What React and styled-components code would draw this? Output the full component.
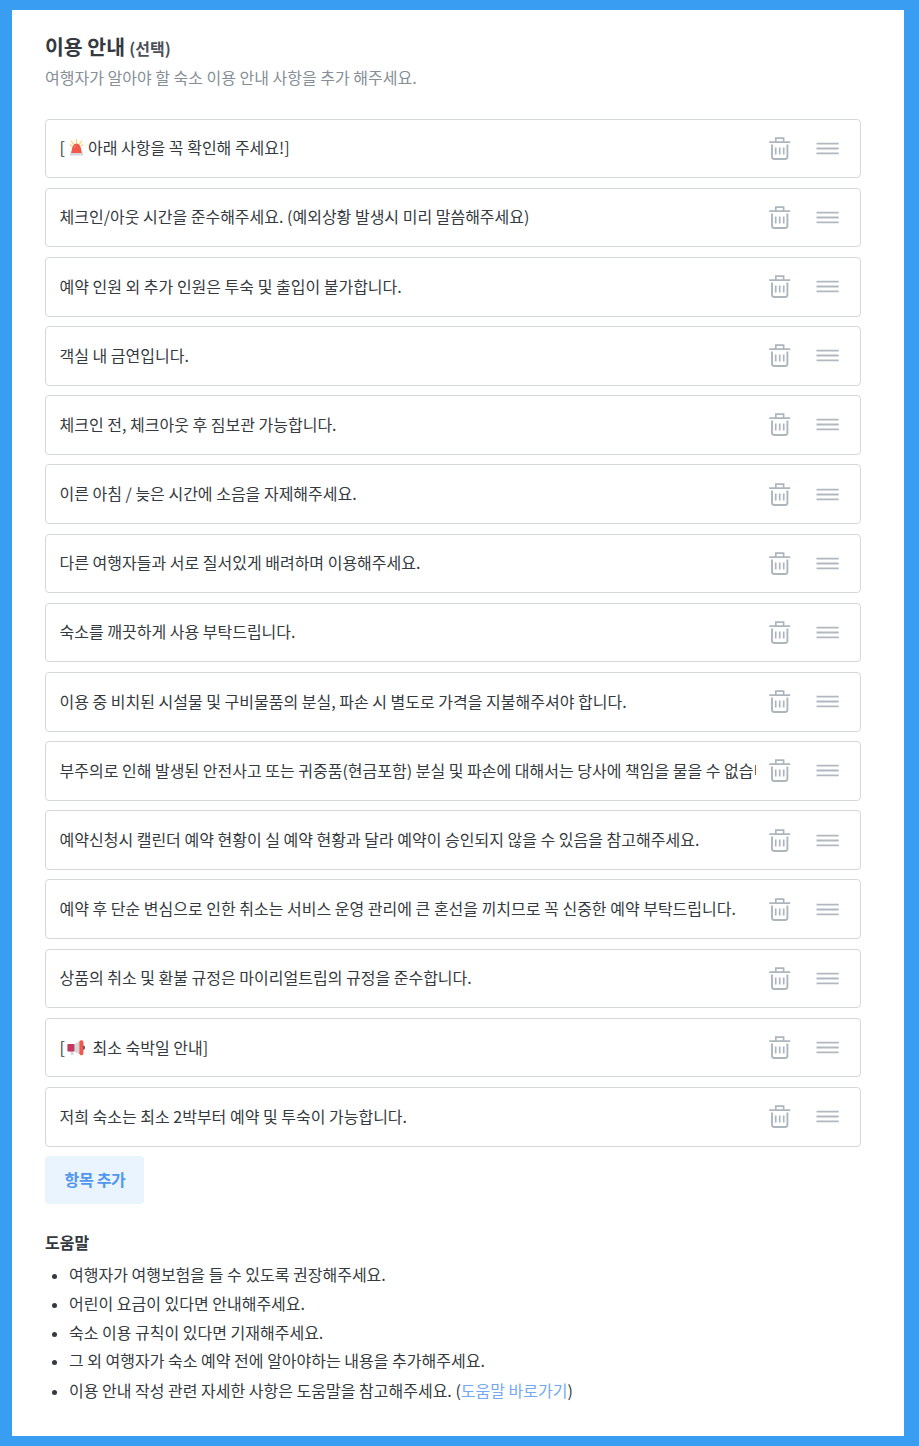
import React from "react";
import styled, { createGlobalStyle } from "styled-components";

const rules = [
  { id: 1, before: "[ ", icon: "siren", text: " 아래 사항을 꼭 확인해 주세요!]" },
  { id: 2, text: "체크인/아웃 시간을 준수해주세요. (예외상황 발생시 미리 말씀해주세요)" },
  { id: 3, text: "예약 인원 외 추가 인원은 투숙 및 출입이 불가합니다." },
  { id: 4, text: "객실 내 금연입니다." },
  { id: 5, text: "체크인 전, 체크아웃 후 짐보관 가능합니다." },
  { id: 6, text: "이른 아침 / 늦은 시간에 소음을 자제해주세요." },
  { id: 7, text: "다른 여행자들과 서로 질서있게 배려하며 이용해주세요." },
  { id: 8, text: "숙소를 깨끗하게 사용 부탁드립니다." },
  { id: 9, text: "이용 중 비치된 시설물 및 구비물품의 분실, 파손 시 별도로 가격을 지불해주셔야 합니다." },
  { id: 10, text: "부주의로 인해 발생된 안전사고 또는 귀중품(현금포함) 분실 및 파손에 대해서는 당사에 책임을 물을 수 없습니다." },
  { id: 11, text: "예약신청시 캘린더 예약 현황이 실 예약 현황과 달라 예약이 승인되지 않을 수 있음을 참고해주세요." },
  { id: 12, text: "예약 후 단순 변심으로 인한 취소는 서비스 운영 관리에 큰 혼선을 끼치므로 꼭 신중한 예약 부탁드립니다." },
  { id: 13, text: "상품의 취소 및 환불 규정은 마이리얼트립의 규정을 준수합니다." },
  { id: 14, before: "[", icon: "megaphone", text: " 최소 숙박일 안내]" },
  { id: 15, text: "저희 숙소는 최소 2박부터 예약 및 투숙이 가능합니다." },
];

const tips = [
  "여행자가 여행보험을 들 수 있도록 권장해주세요.",
  "어린이 요금이 있다면 안내해주세요.",
  "숙소 이용 규칙이 있다면 기재해주세요.",
  "그 외 여행자가 숙소 예약 전에 알아야하는 내용을 추가해주세요.",
];

function Siren() {
  return (
    <Emoji width="16" height="18" viewBox="2 0 16 18">
      <path
        d="M9.5 .6v3M4.3 2l2 2.6M14.7 2l-2 2.6M3 5.8l1.8 1M16 5.8l-1.8 1"
        stroke="#fcd462"
        strokeWidth="1.2"
        strokeLinecap="round"
      />
      <path d="M4 14.2 5.3 8.4Q6.4 4.6 9.5 4.6t4.2 3.8l1.3 5.8z" fill="#ef5a4a" />
      <path d="M7.2 7.6q.6-1.1 1.6-1.1L7.8 9z" fill="#f89a8f" />
      <rect x="3" y="14" width="13" height="2.6" rx=".7" fill="#d5d6db" />
    </Emoji>
  );
}

function Megaphone() {
  return (
    <Emoji width="24" height="18" viewBox="-1 0 24 18">
      <path d="M3.8 11.4h3.4l.5 4.6H5.2z" fill="#d5d6db" />
      <path d="M8 5.2 14 2v13.6l-6-3z" fill="#d5d6db" />
      <rect x="1.4" y="5" width="7" height="7.6" rx=".8" fill="#c1395e" />
      <path d="M17 6.2q2 .4 2 2.4t-2 2.5z" fill="#464655" />
      <rect x="13.4" y="1.3" width="4" height="15" rx="1.7" fill="#ef5a4a" />
    </Emoji>
  );
}

function Trash() {
  return (
    <svg width="24" height="26" viewBox="0 0 24 26" fill="none" stroke="#adb5bd">
      <path d="M1.2 6.1h21M7.8 6V2.1h7.8V6" strokeWidth="1.7" />
      <path d="M4 8.6v12.2q0 2.2 2.2 2.2h11q2.2 0 2.2-2.2V8.6" strokeWidth="1.9" />
      <path d="M7.7 11.4v7.2M11.7 11.4v7.2M15.7 11.4v7.2" strokeWidth="1.7" />
    </svg>
  );
}

function Handle() {
  return (
    <svg width="24" height="16" viewBox="0 0 24 16" stroke="#b1b8c0" strokeWidth="1.8">
      <path d="M.5 2.6h22.2M.5 7.5h22.2M.5 12.4h22.2" />
    </svg>
  );
}

export default function App() {
  return (
    <Page>
      <GlobalStyle />
      <Card>
        <Title>
          이용 안내 <Optional>(선택)</Optional>
        </Title>
        <Description>여행자가 알아야 할 숙소 이용 안내 사항을 추가 해주세요.</Description>
        <Rules>
          {rules.map((rule) => (
            <Rule key={rule.id}>
              <RuleText>
                {rule.before}
                {rule.icon === "siren" && <Siren />}
                {rule.icon === "megaphone" && <Megaphone />}
                {rule.text}
              </RuleText>
              <IconButton aria-label="삭제">
                <Trash />
              </IconButton>
              <IconButton aria-label="이동">
                <Handle />
              </IconButton>
            </Rule>
          ))}
        </Rules>
        <AddButton>항목 추가</AddButton>
        <HelpTitle>도움말</HelpTitle>
        <Tips>
          {tips.map((tip) => (
            <Tip key={tip}>{tip}</Tip>
          ))}
          <Tip $last>
            이용 안내 작성 관련 자세한 사항은 도움말을 참고해주세요. (
            <HelpLink>도움말 바로가기</HelpLink>)
          </Tip>
        </Tips>
      </Card>
    </Page>
  );
}

const GlobalStyle = createGlobalStyle`
  * {
    box-sizing: border-box;
  }
  body {
    margin: 0;
    font-family: "Noto Sans CJK KR", sans-serif;
    font-size: 16px;
    color: #343a40;
  }
`;
const Page = styled.div`
  height: 1446px;
  padding: 10px 15px 10px 12px;
  background-color: #399df1;
`;
const Card = styled.div`
  height: 1426px;
  padding: 20px 43px 0 33px;
  background-color: white;
`;
const Title = styled.h1`
  margin: 0;
  font-size: 20.5px;
  font-weight: 600;
  line-height: 32px;
  color: #343a40;
`;
const Optional = styled.span`
  margin-left: -0.5px;
  font-size: 16px;
  color: #495057;
`;
const Description = styled.p`
  margin: 0;
  line-height: 26px;
  color: #868e96;
`;
const Rules = styled.div`
  display: flex;
  flex-direction: column;
  gap: 9.6px;
  margin-top: 28.6px;
`;
const Rule = styled.div`
  display: flex;
  align-items: center;
  height: 59.58px;
  padding: 0.8px 20px 0 13.5px;
  border: 1px solid #d5d8dc;
  border-radius: 4px;
`;
const RuleText = styled.div`
  flex: 1;
  min-width: 0;
  padding-bottom: 3px;
  overflow: hidden;
  white-space: pre;
  line-height: 28px;
`;
const Emoji = styled.svg`
  vertical-align: -3px;
  fill: none;
`;
const IconButton = styled.button`
  display: flex;
  align-items: center;
  justify-content: center;
  width: 24px;
  height: 26px;
  margin-left: 12px;
  padding: 0;
  border: none;
  background-color: transparent;
  cursor: pointer;

  & + & {
    margin-left: 24px;
  }
`;
const AddButton = styled.button`
  display: block;
  width: 99px;
  height: 48px;
  margin-top: 9.5px;
  padding: 0 0 2px 1px;
  border: none;
  border-radius: 4px;
  background-color: #e9f4ff;
  font-family: inherit;
  font-size: 16px;
  font-weight: 600;
  letter-spacing: -0.3px;
  color: #5196ee;
  cursor: pointer;
`;
const HelpTitle = styled.h2`
  margin: 24px 0 0;
  font-size: 16px;
  font-weight: 600;
  line-height: 28px;
`;
const Tips = styled.ul`
  margin: 4px 0 0;
  padding-left: 24px;
  list-style: none;
`;
const Tip = styled.li`
  line-height: 28.8px;
  padding-top: ${(props) => (props.$last ? "1px" : "0")};

  &::before {
    content: "";
    display: inline-block;
    width: 5px;
    height: 5px;
    margin: 0 12px 0 -17px;
    border-radius: 50%;
    background-color: #343a40;
    vertical-align: 2px;
  }
`;
const HelpLink = styled.a`
  color: #74a8f5;
  cursor: pointer;
`;
